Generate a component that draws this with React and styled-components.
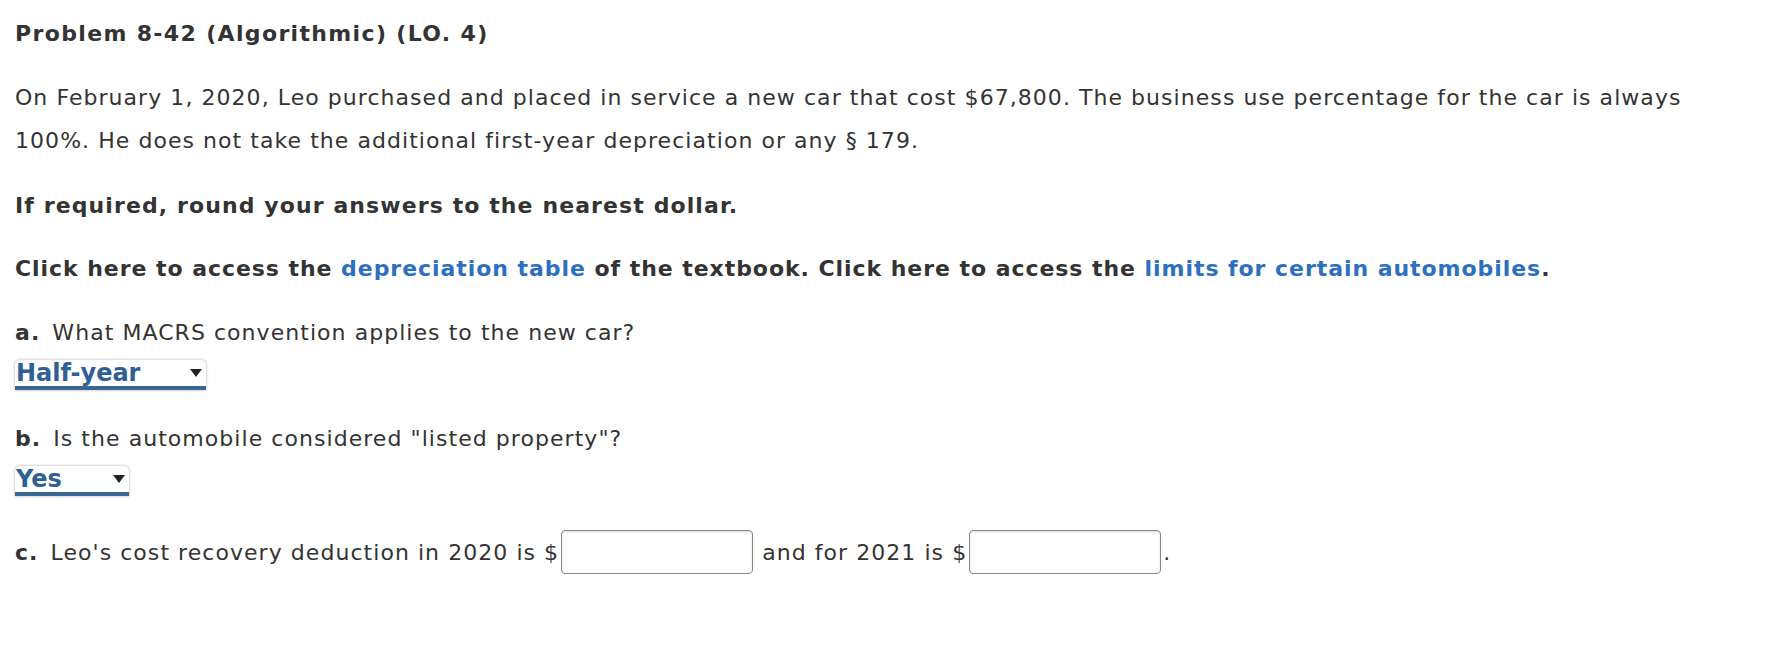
import React from 'react';
import styled, { createGlobalStyle } from 'styled-components';

const GlobalStyle = createGlobalStyle`
  html, body { margin: 0; padding: 0; background: #fff; }
  body {
    font-family: "DejaVu Sans", Verdana, sans-serif;
    color: #333;
  }
`;

const Page = styled.div`
  padding: 18px 15px 40px 15px;
  width: 1772px;
  box-sizing: border-box;
`;

const Title = styled.h1`
  margin: 0;
  font-size: 22px;
  letter-spacing: 1.35px;
  line-height: 32px;
  font-weight: bold;
`;

const Para = styled.p`
  margin: ${({ top }) => top || 0}px 0 0 0;
  font-size: 22px;
  letter-spacing: ${({ spacing }) => spacing || 1.05}px;
  line-height: 43px;
  font-weight: ${({ bold }) => (bold ? 'bold' : 'normal')};
`;

const Link = styled.a`
  color: #2d6fc0;
  text-decoration: none;
`;

const Question = styled.div`
  margin-top: ${({ top }) => top}px;
  font-size: 22px;
  letter-spacing: 1.05px;
  line-height: 30px;
`;

const Letter = styled.b`
  margin-right: 4px;
`;

const Select = styled.div`
  margin-top: 12px;
  display: flex;
  align-items: center;
  justify-content: space-between;
  box-sizing: border-box;
  width: ${({ w }) => w}px;
  height: 30px;
  padding: 0 4px 0 1px;
  background: #fff;
  border-radius: 5px;
  box-shadow: 0 0 3px rgba(0, 0, 0, 0.35);
  border-bottom: 4px solid #3b6592;
  border-bottom-left-radius: 0;
  border-bottom-right-radius: 0;
  font-size: 24px;
  font-weight: bold;
  color: #2e5f95;
`;

const Caret = styled.span`
  width: 0;
  height: 0;
  border-left: 6px solid transparent;
  border-right: 6px solid transparent;
  border-top: 8px solid #222;
`;

const AnswerRow = styled.div`
  margin-top: ${({ top }) => top}px;
  display: flex;
  align-items: center;
  font-size: 22px;
  letter-spacing: 1.05px;
  white-space: pre;
`;

const Input = styled.input`
  box-sizing: border-box;
  width: 192px;
  height: 44px;
  margin: 0 ${({ after }) => after}px 0 2px;
  border: 1px solid #8a8a8a;
  border-radius: 4px;
  box-shadow: inset 0 1px 2px rgba(0, 0, 0, 0.15);
  background: #fff;
`;

export default function App() {
  return (
    <>
      <GlobalStyle />
      <Page>
        <Title>Problem 8-42 (Algorithmic) (LO. 4)</Title>
        <Para top={26}>
          On February 1, 2020, Leo purchased and placed in service a new car that cost $67,800. The business use percentage for the car is always
          <br />
          100%. He does not take the additional first-year depreciation or any § 179.
        </Para>
        <Para top={22} bold spacing={1.1}>If required, round your answers to the nearest dollar.</Para>
        <Para top={20} bold spacing={0.95}>
          Click here to access the <Link href="#">depreciation table</Link> of the textbook. Click here to access the{' '}
          <Link href="#">limits for certain automobiles</Link>.
        </Para>
        <Question top={28}>
          <Letter>a.</Letter> What MACRS convention applies to the new car?
        </Question>
        <Select w={191}>
          <span>Half-year</span>
          <Caret />
        </Select>
        <Question top={34}>
          <Letter>b.</Letter> Is the automobile considered "listed property"?
        </Question>
        <Select w={114}>
          <span>Yes</span>
          <Caret />
        </Select>
        <AnswerRow top={34}>
          <Letter>c.</Letter>
          <span> Leo's cost recovery deduction in 2020 is $</span>
          <Input after={9} />
          <span>and for 2021 is $</span>
          <Input after={2} />
          <span>.</span>
        </AnswerRow>
      </Page>
    </>
  );
}
